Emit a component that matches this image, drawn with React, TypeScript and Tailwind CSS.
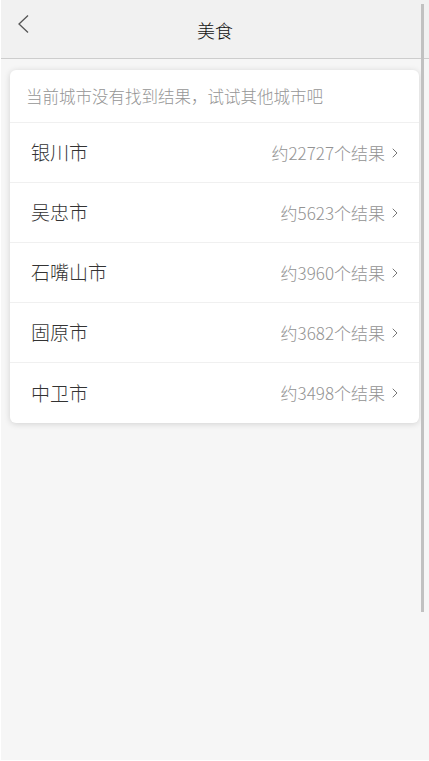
import { ChevronRight } from 'lucide-react';

const cities = [
  { name: '银川市', count: 22727 },
  { name: '吴忠市', count: 5623 },
  { name: '石嘴山市', count: 3960 },
  { name: '固原市', count: 3682 },
  { name: '中卫市', count: 3498 },
];

export default function App() {
  return (
    <div
      className="relative h-[761px] w-full overflow-hidden border-l border-b border-white bg-[#f6f6f6] font-light"
      style={{ fontFamily: '"Noto Sans CJK SC", "Noto Sans", sans-serif' }}
    >
      {/* Top bar */}
      <div className="relative flex h-[59px] items-center justify-center border-b border-[#cdcdcd] bg-[#f1f1f1]">
        <button className="absolute left-[12px] top-[10px] p-1">
          <svg width="14" height="20" viewBox="0 0 14 20" fill="none">
            <polyline points="11,1.5 2,10 11,18.5" stroke="#555" strokeWidth="1.3" />
          </svg>
        </button>
        <h1 className="mt-[2px] text-[18px] text-[#111]">美食</h1>
      </div>

      {/* Result card */}
      <div className="mx-[9px] mt-[11px] mr-[10px] overflow-hidden rounded-[6px] bg-white shadow-[0_1px_6px_rgba(0,0,0,0.15)]">
        <div className="flex h-[53px] items-center border-b border-[#f0f0f0] pl-[16px] text-[16.5px] text-[#959595]">
          当前城市没有找到结果，试试其他城市吧
        </div>
        {cities.map((c, i) => (
          <div
            key={c.name}
            className={`flex h-[60px] items-center justify-between pl-[21px] pr-[16px] ${
              i < cities.length - 1 ? 'border-b border-[#f0f0f0]' : ''
            }`}
          >
            <span className="text-[19px] text-[#333]">{c.name}</span>
            <span className="flex items-center gap-[2px] text-[17px] text-[#939393]">
              约{c.count}个结果
              <ChevronRight size={16} strokeWidth={1.5} className="text-[#777]" />
            </span>
          </div>
        ))}
      </div>

      {/* Scrollbar */}
      <div className="absolute right-[5px] top-[4px] h-[608px] w-[3px] bg-[#c1c1c1]" />
    </div>
  );
}
